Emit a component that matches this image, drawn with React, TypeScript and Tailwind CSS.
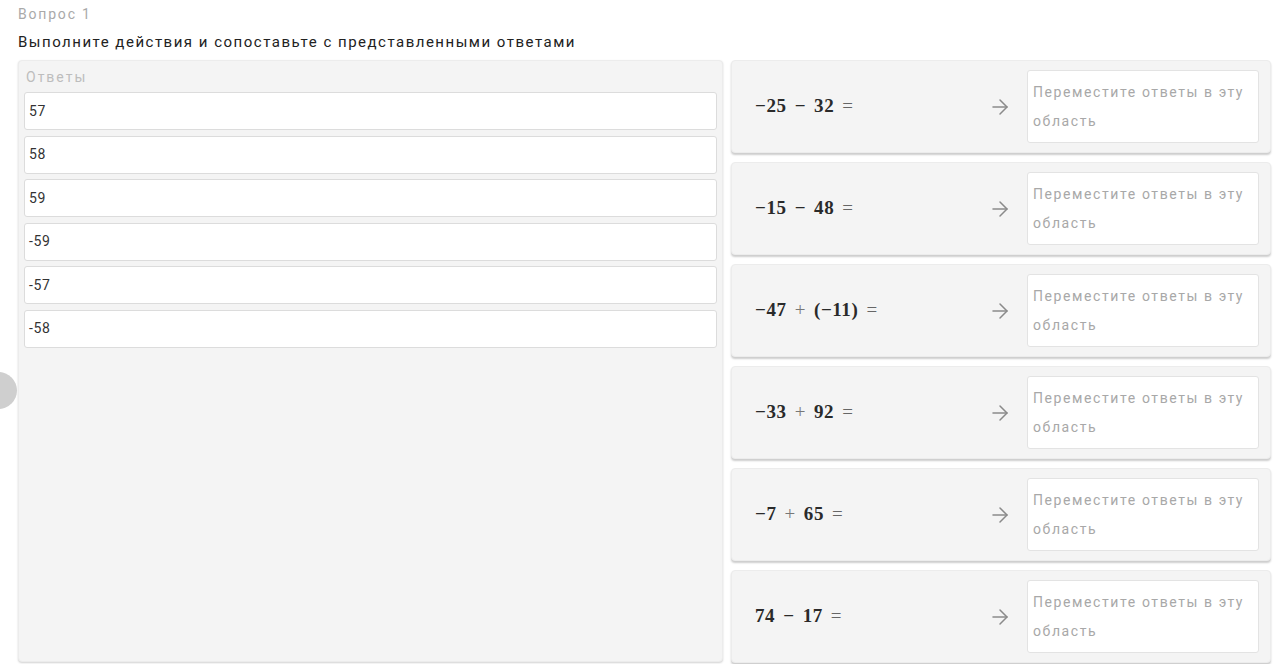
import { ArrowRight } from 'lucide-react';

const ANSWERS = ['57', '58', '59', '-59', '-57', '-58'];

// expressions are typeset like TeX: numbers upright serif, operators spaced
const TASKS: string[][] = [
  ['−25', '−', '32', '='],
  ['−15', '−', '48', '='],
  ['−47', '+', '(−11)', '='],
  ['−33', '+', '92', '='],
  ['−7', '+', '65', '='],
  ['74', '−', '17', '='],
];

function MathExpr({ parts }: { parts: string[] }) {
  return (
    <span className="flex items-center gap-[8px] text-[19px] tracking-[0.6px] text-[#2a2a2a]" style={{ fontFamily: '"Liberation Serif", "DejaVu Serif", serif' }}>
      {parts.map((p, i) => (
        <span key={i} className={p === '=' ? 'text-[#666]' : p === '+' ? 'text-[#777]' : 'font-semibold'}>{p}</span>
      ))}
    </span>
  );
}

function DropZone() {
  return (
    <div className="w-[232px] h-[73px] shrink-0 bg-white border border-[#e3e3e3] rounded-[3px] px-[5px] pt-[7px] text-[14px] leading-[29px] tracking-[1.6px] text-[#a8a8a8]">
      Переместите ответы в эту область
    </div>
  );
}

export default function App() {
  return (
    <div className="relative w-[1280px] h-[664px] bg-white overflow-hidden" style={{ fontFamily: 'Roboto, "Noto Sans", sans-serif' }}>
      {/* half-hidden round handle on the left edge */}
      <div className="absolute left-[-20px] top-[372px] w-[37px] h-[37px] rounded-full bg-[#cfcfcf]" />

      <div className="pl-[18px] pt-[5px]">
        <div className="text-[14px] leading-[18px] tracking-[1.8px] text-[#a9a9a9]">Вопрос 1</div>
        <div className="mt-[10px] text-[15px] leading-[18px] tracking-[1.5px] text-[#222]">Выполните действия и сопоставьте с представленными ответами</div>

        <div className="mt-[9px] flex gap-[8px]">
          <div className="w-[705px] h-[602px] bg-[#f4f4f4] rounded-[4px] border border-[#ececec] shadow-[0_1px_2px_rgba(0,0,0,0.18)] px-[5px] pt-[8px]">
            <div className="text-[14px] leading-[17px] tracking-[2px] text-[#bdbdbd] pl-[2px]">Ответы</div>
            <div className="mt-[6px] flex flex-col gap-[5.5px]">
              {ANSWERS.map((a) => (
                <div key={a} className="h-[38px] bg-white border border-[#dcdcdc] rounded-[3px] flex items-center pl-[4px] text-[14px] tracking-[0.6px] text-[#333]">
                  {a}
                </div>
              ))}
            </div>
          </div>

          <div className="w-[540px] flex flex-col gap-[9px]">
            {TASKS.map((t, i) => (
              <div key={i} className="h-[93px] bg-[#f4f4f4] rounded-[4px] border border-[#ececec] shadow-[0_2px_2px_rgba(0,0,0,0.2)] flex items-center pl-[23px] pr-[11px]">
                <MathExpr parts={t} />
                <div className="ml-auto flex items-center gap-[15px]">
                  <ArrowRight className="w-[24px] h-[24px] text-[#8a8a8a]" strokeWidth={1.5} />
                  <DropZone />
                </div>
              </div>
            ))}
          </div>
        </div>
      </div>
    </div>
  );
}
